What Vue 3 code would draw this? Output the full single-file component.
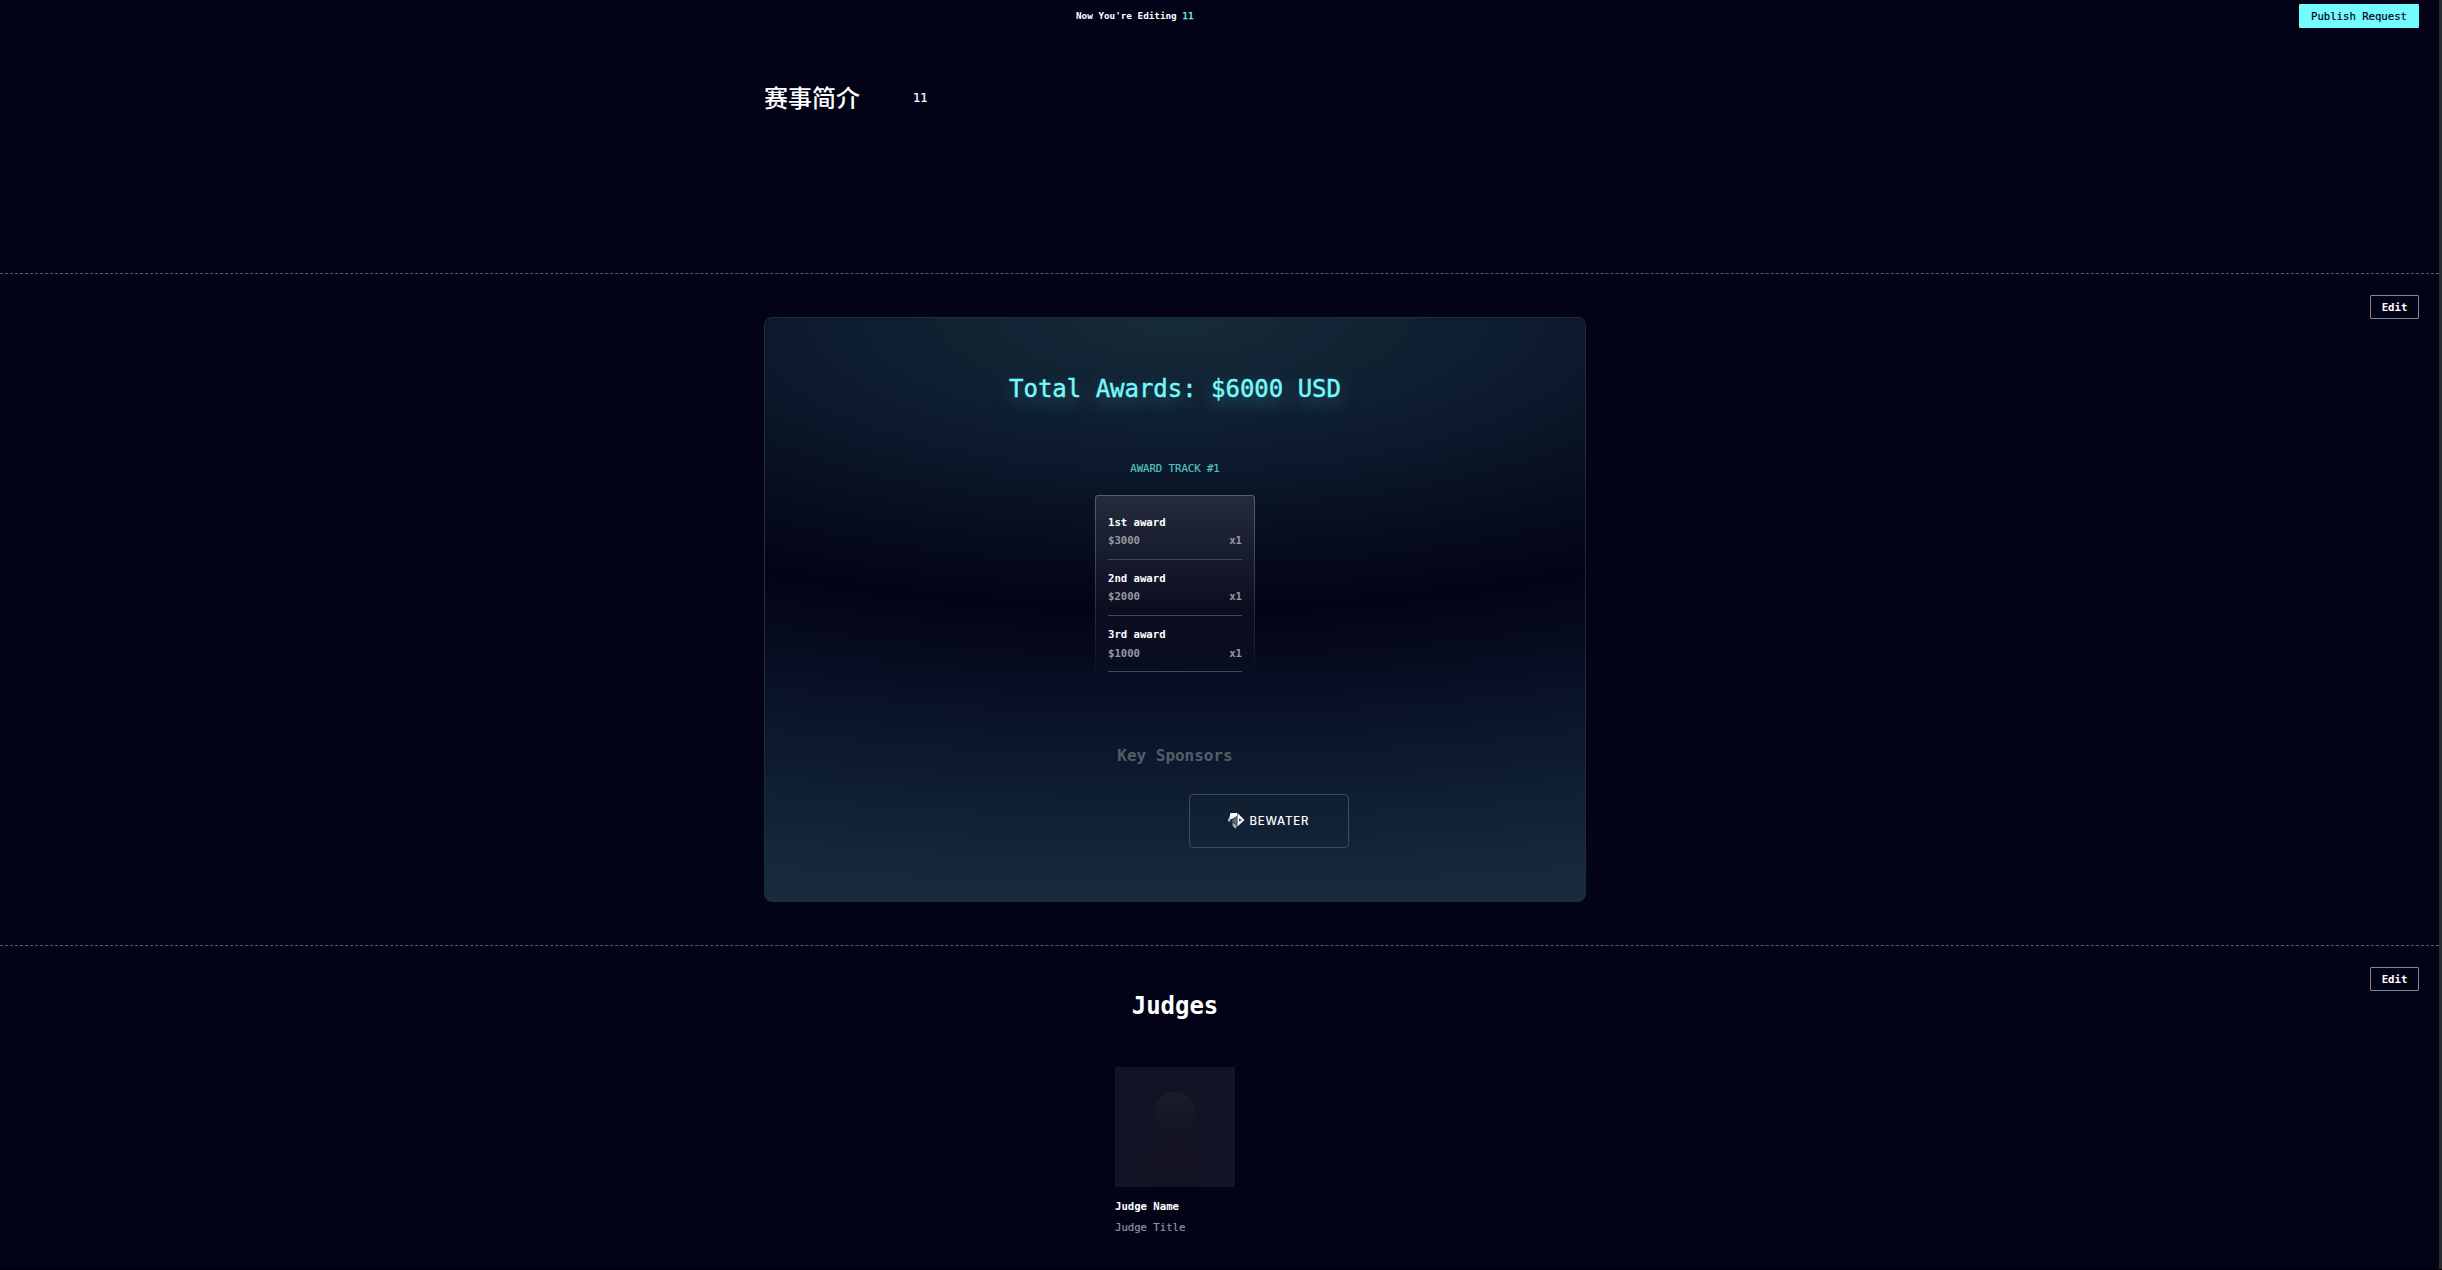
<script setup>
const awards = [
  { name: '1st award', amount: '$3000', count: 'x1' },
  { name: '2nd award', amount: '$2000', count: 'x1' },
  { name: '3rd award', amount: '$1000', count: 'x1' },
]
</script>

<template>
  <div class="page">
    <div class="content">
      <header class="topbar">
        <div class="editing">Now You're Editing <span>11</span></div>
        <button class="publish">Publish Request</button>
      </header>

      <section class="intro">
        <h2>赛事简介</h2>
        <p>11</p>
      </section>

      <section class="block awards">
        <div class="card">
          <h1>Total Awards: $6000 USD</h1>
          <div class="track">AWARD TRACK #1</div>
          <div class="table">
            <div v-for="a in awards" :key="a.name" class="row">
              <div class="name">{{ a.name }}</div>
              <div class="value"><span>{{ a.amount }}</span><span>{{ a.count }}</span></div>
            </div>
          </div>
          <h3>Key Sponsors</h3>
          <div class="sponsor">
            <svg width="17" height="16" viewBox="0 0 17 16">
              <path d="M2.500 0H9V3L4 6L1 6.500Z" fill="#fff" />
              <path d="M9.500 0L16.500 7L9.500 13.500Z" fill="#f4f6f8" />
              <path d="M9 3V12L3.500 8Z" fill="#5d6875" />
              <path d="M0 5.500L2.500 6L2 9L0 8Z" fill="#aeb6be" />
              <path d="M4.500 9.500L9 12.500L7.500 16L4.500 12.500Z" fill="#a4adb6" />
              <path d="M11 5.500L14 7L11 8.500Z" fill="#27394a" />
            </svg>
            <span class="brand">BEWATER</span>
          </div>
        </div>
        <button class="edit">Edit</button>
      </section>

      <section class="block judges">
        <div class="panel">
          <h2>Judges</h2>
          <div class="judge">
            <svg class="avatar" width="120" height="120" viewBox="0 0 120 120">
              <defs>
                <linearGradient id="head" x1="0" y1="0" x2="0" y2="1">
                  <stop offset="0" stop-color="#1b1c29" />
                  <stop offset="1" stop-color="#141523" />
                </linearGradient>
                <linearGradient id="body" x1="0" y1="0" x2="0" y2="1">
                  <stop offset="0" stop-color="#151423" />
                  <stop offset="1" stop-color="#121322" />
                </linearGradient>
              </defs>
              <rect width="120" height="120" fill="#121325" />
              <circle cx="60" cy="45" r="20.500" fill="url(#head)" />
              <path d="M34 120V96a26 26 0 0 1 52 0V120Z" fill="url(#body)" />
            </svg>
            <div class="jname">Judge Name</div>
            <div class="jtitle">Judge Title</div>
          </div>
        </div>
        <button class="edit">Edit</button>
      </section>
    </div>
    <div class="scrollbar"></div>
  </div>
</template>

<style>
body {
  background: #030318;
  overflow: hidden;
}
</style>

<style scoped>
* {
  box-sizing: border-box;
  margin: 0;
}
.page {
  display: flex;
  height: 1270px;
  border-bottom: 1px solid #000;
  background: #030318;
  color: #fff;
  font-family: 'DejaVu Sans Mono', 'Noto Sans CJK SC', monospace;
  font-size: 10.667px;
  line-height: 16px;
  letter-spacing: -0.002em;
  white-space: nowrap;
}
.content {
  flex: 1;
}
.scrollbar {
  width: 3px;
  background: #2a2b30;
}
button {
  height: 24px;
  padding: 1px 0 0;
  font: inherit;
  letter-spacing: inherit;
  text-align: center;
}
.topbar {
  display: flex;
  justify-content: space-between;
  height: 32px;
  padding: 4px 20px 0 1076px;
}
.editing {
  margin-top: 4px;
  font-size: 9.333px;
  font-weight: bold;
}
.editing span {
  color: #74fbfd;
  font-weight: normal;
  -webkit-text-stroke: 0.25px;
}
.publish {
  width: 120px;
  border: 0;
  border-radius: 1px;
  background: #74fbfd;
  color: #020216;
  -webkit-text-stroke: 0.2px;
}
.intro {
  display: flex;
  align-items: center;
  gap: 53px;
  height: 241px;
  padding: 0 0 111px 764px;
}
.intro h2 {
  font: 500 24px/32px 'Noto Sans CJK SC', sans-serif;
  letter-spacing: 0;
}
.intro p {
  padding-top: 2px;
  font-size: 12px;
  -webkit-text-stroke: 0.2px;
}
.block {
  display: flex;
  align-items: flex-start;
  justify-content: space-between;
  border-top: 1px dashed #5b5b67;
  padding: 21px 20px 0 764px;
}
.edit {
  width: 49px;
  border: 1px solid #85858e;
  border-radius: 1px;
  background: transparent;
  color: #fff;
  font-weight: bold;
}
.awards {
  height: 672px;
}
.card {
  display: flex;
  flex-direction: column;
  align-items: center;
  width: 822px;
  height: 585px;
  margin-top: 22px;
  border: 1px solid #1e2b39;
  border-radius: 8px;
  background: radial-gradient(200% 100% at 50% 0, #162b3a 0%, #0c192c 25%, #030317 50%, #0b162b 73%, #172b3c 100%);
}
h1 {
  margin-top: 55px;
  font-size: 24px;
  line-height: 32px;
  font-weight: normal;
  color: #74fbfd;
  -webkit-text-stroke: 0.4px;
  text-shadow: 0 6px 20px rgba(116, 251, 253, 0.4);
}
.track {
  margin-top: 56px;
  color: #55c1bf;
  -webkit-text-stroke: 0.2px;
}
.table {
  width: 160px;
  height: 187px;
  margin-top: 18px;
  padding: 9px 13px 0;
  border-radius: 3px;
  position: relative;
  background: linear-gradient(rgba(255, 255, 255, 0.1), rgba(255, 255, 255, 0));
}
.table::before {
  content: '';
  position: absolute;
  inset: 0;
  border: 1px solid #565f6c;
  border-bottom: 0;
  border-radius: 3px;
  mask-image: linear-gradient(#000, transparent);
}
.row {
  height: 56px;
  padding-top: 11px;
  border-bottom: 1px solid #464854;
  font-weight: bold;
}
.value {
  display: flex;
  justify-content: space-between;
  margin-top: 2px;
  color: #97989f;
}
.row:last-child .value {
  margin-top: 3px;
}
h3 {
  margin-top: 64px;
  font-size: 16px;
  line-height: 20px;
  color: #535d69;
}
.sponsor {
  display: flex;
  align-items: center;
  gap: 5px;
  width: 160px;
  height: 54px;
  margin: 28px 0 0 187px;
  padding-left: 38px;
  border: 1px solid #3e4b58;
  border-radius: 4px;
}
.brand {
  font: 500 11.5px/12px Inter, sans-serif;
  letter-spacing: 0.75px;
}
.judges {
  height: 324px;
}
.panel {
  display: flex;
  flex-direction: column;
  align-items: center;
  width: 822px;
  padding-top: 23px;
}
.judges h2 {
  font-size: 24px;
  line-height: 32px;
}
.judge {
  width: 120px;
  margin-top: 45px;
}
.avatar {
  display: block;
}
.jname {
  margin-top: 12px;
  font-weight: bold;
}
.jtitle {
  margin-top: 5px;
  color: #8c96a6;
  -webkit-text-stroke: 0.2px;
}
</style>
